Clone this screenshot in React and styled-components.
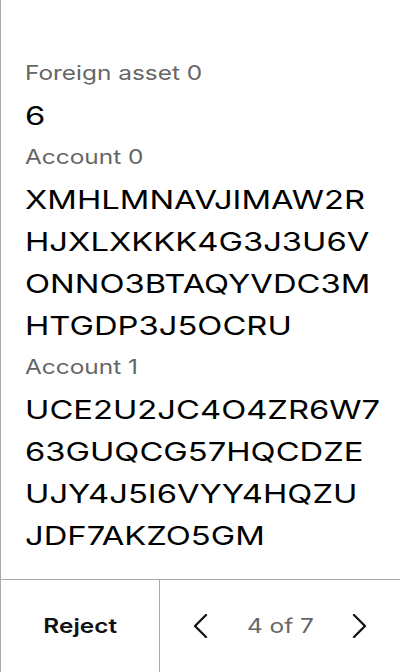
import React from 'react'
import styled, { createGlobalStyle } from 'styled-components'

// the reference type is set wide; Inter is narrower, so text is stretched horizontally
const WIDE = 1.22
const WIDE_VALUE = 1.26

const GlobalStyle = createGlobalStyle`
  html, body {
    margin: 0;
    padding: 0;
    background: #fff;
  }
  body {
    font-family: Inter, "Noto Sans", sans-serif;
  }
`

// values are shown in the same rows the device screen breaks them into
const fields = [
  { label: 'Foreign asset 0', lines: ['6'] },
  {
    label: 'Account 0',
    lines: ['XMHLMNAVJIMAW2R', 'HJXLXKKK4G3J3U6V', 'ONNO3BTAQYVDC3M', 'HTGDP3J5OCRU'],
  },
  {
    label: 'Account 1',
    lines: ['UCE2U2JC4O4ZR6W7', '63GUQCG57HQCDZE', 'UJY4J5I6VYY4HQZU', 'JDF7AKZO5GM'],
  },
]

const Chevron = ({ dir }) => (
  <svg width='16' height='24' viewBox='0 0 16 24' fill='none'>
    <path
      d={dir === 'left' ? 'M14 1 L3 12 L14 23' : 'M2 1 L13 12 L2 23'}
      stroke='#111'
      strokeWidth='2.3'
      strokeLinecap='round'
      strokeLinejoin='round'
    />
  </svg>
)

const App = () => {
  return (
    <Screen>
      <GlobalStyle />
      <Content>
        {fields.map((item) => (
          <Field key={item.label}>
            <Label>{item.label}</Label>
            <Value>
              {item.lines.map((line) => (
                <ValueLine key={line}>{line}</ValueLine>
              ))}
            </Value>
          </Field>
        ))}
      </Content>
      <Footer>
        <RejectButton>
          <Wide>Reject</Wide>
        </RejectButton>
        <Pager>
          <NavButton aria-label='previous'>
            <Chevron dir='left' />
          </NavButton>
          <PageText>4 of 7</PageText>
          <NavButton aria-label='next'>
            <Chevron dir='right' />
          </NavButton>
        </Pager>
      </Footer>
    </Screen>
  )
}

const Screen = styled.div`
  width: 400px;
  height: 672px;
  box-sizing: border-box;
  border-left: 1px solid #aaa;
  display: flex;
  flex-direction: column;
  overflow: hidden;
`

const Content = styled.div`
  flex: 1;
  padding: 59px 0 0 24px;
  display: flex;
  flex-direction: column;
  gap: 6px;
`

const Field = styled.div`
  display: flex;
  flex-direction: column;
  align-items: flex-start;
  gap: 8px;
`

const Label = styled.div`
  font-size: 20px;
  line-height: 28px;
  color: #666;
  transform: scaleX(${WIDE});
  transform-origin: left center;
`

const Value = styled.div`
  font-size: 26px;
  line-height: 42px;
  color: #000;
  transform: scaleX(${WIDE_VALUE});
  transform-origin: left center;
`

const ValueLine = styled.div`
  white-space: nowrap;
`

const Footer = styled.div`
  height: 92px;
  flex-shrink: 0;
  border-top: 1px solid #aaa;
  display: grid;
  grid-template-columns: 159px 1fr;
`

const RejectButton = styled.button`
  border: none;
  border-right: 1px solid #aaa;
  background: none;
  font-family: Inter, "Noto Sans", sans-serif;
  font-size: 20px;
  font-weight: 600;
  color: #111;
  padding: 0;
`

const Wide = styled.span`
  display: inline-block;
  transform: scaleX(${WIDE});
`

const Pager = styled.div`
  display: flex;
  align-items: center;
  justify-content: space-between;
  padding: 0 32px;
`

const NavButton = styled.button`
  border: none;
  background: none;
  padding: 0;
  width: 16px;
  height: 24px;
  display: flex;
  align-items: center;
  justify-content: center;
`

const PageText = styled.span`
  display: inline-block;
  font-size: 20px;
  color: #666;
  transform: scaleX(${WIDE});
`

export default App
